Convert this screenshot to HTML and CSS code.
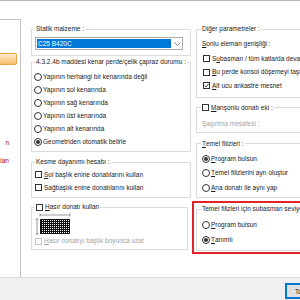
FILE: index.html
```html
<!DOCTYPE html>
<html lang="tr">
<head>
    <meta charset="UTF-8">
    <title>Perde Ayarları</title>
    <link rel="stylesheet" href="styles.css">
</head>
<body>

<div class="window">
    <div class="main">
        <div class="sidebar">
            <div class="tree-item selected"></div>
            <div class="tree-item flagged first">n</div>
            <div class="tree-item flagged">lan</div>
        </div>

        <div class="col col-left">
            <fieldset class="group g-malzeme">
                <legend>Statik malzeme :</legend>
                <div class="combo">
                    <span class="combo-value">C25 B420C</span>
                    <svg class="combo-arrow" width="7" height="4" viewBox="0 0 7 4"><polyline points="0.5,0.5 3.5,3.5 6.5,0.5" fill="none" stroke="#606060" stroke-width="0.8"/></svg>
                </div>
            </fieldset>

            <fieldset class="group g-kenar">
                <legend>4.3.2.4b maddesi kenar perde/çelik çapraz durumu :</legend>
                <div class="row"><span class="radio"></span>Yapının herhangi bir kenarında değil</div>
                <div class="row"><span class="radio"></span>Yapının sol kenarında</div>
                <div class="row"><span class="radio"></span>Yapının sağ kenarında</div>
                <div class="row"><span class="radio"></span>Yapının üst kenarında</div>
                <div class="row"><span class="radio"></span>Yapının alt kenarında</div>
                <div class="row"><span class="radio on"></span>Geometriden otomatik belirle</div>
            </fieldset>

            <fieldset class="group g-kesme">
                <legend>Kesme dayanımı hesabı :</legend>
                <div class="row"><span class="check"></span><u>S</u>ol başlık enine donatılarını kullan</div>
                <div class="row"><span class="check"></span>Sa<u>ğ</u> başlık enine donatılarını kullan</div>
            </fieldset>

            <fieldset class="group g-hasir">
                <legend><span class="check"></span><u>H</u>asır donatı kullan</legend>
                <svg class="mesh" width="37" height="22" viewBox="0 0 37 22">
                    <defs>
                        <pattern id="net" width="2" height="2" patternUnits="userSpaceOnUse">
                            <path d="M0.5 0V2M0 0.5H2" stroke="#111" stroke-width="1"/>
                        </pattern>
                    </defs>
                    <g stroke="#555" stroke-width="0.6" fill="none">
                        <path d="M5 2H35M5 0.5V3.5M35 0.5V3.5"/>
                        <path d="M2 6V21M0.5 6H3.5M0.5 21H3.5"/>
                    </g>
                    <rect x="5" y="6" width="30" height="15" fill="url(#net)"/>
                    <rect x="5.5" y="6.5" width="29" height="14" fill="none" stroke="#111" stroke-width="1"/>
                </svg>
                <div class="row short disabled"><span class="check"></span><u>H</u>asır donatıyı başlık boyunca uzat</div>
            </fieldset>
        </div>

        <div class="col col-right">
            <fieldset class="group g-diger">
                <legend>Diğer parametreler :</legend>
                <div class="row tall"><u>S</u>onlu eleman genişliği :</div>
                <div class="row mid"><span class="check"></span>S<u>u</u> basman / tüm katlarda devam etsin</div>
                <div class="row mid"><span class="check"></span><u>B</u>u perde konsol döşemeyi taşıyor</div>
                <div class="row mid"><span class="check on"><svg width="5" height="5" viewBox="0 0 5 5"><polyline points="0.4,2.6 1.9,4 4.6,0.8" fill="none" stroke="#222" stroke-width="0.9"/></svg></span><u>A</u>lt ucu ankastre mesnet</div>
            </fieldset>

            <fieldset class="group g-manson">
                <legend><span class="check"></span><u>M</u>anşonlu donatı eki :</legend>
                <div class="row field disabled">Şaşırtma mesafesi :</div>
            </fieldset>

            <fieldset class="group g-filiz">
                <legend><u>T</u>emel filizleri :</legend>
                <div class="row wide"><span class="radio on"></span><u>P</u>rogram bulsun</div>
                <div class="row wide"><span class="radio"></span><u>T</u>emel filizlerini ayrı oluştur</div>
                <div class="row wide"><span class="radio"></span><u>A</u>na donatı ile aynı yap</div>
            </fieldset>

            <div class="highlight">
                <fieldset class="group g-subasman">
                    <legend>Temel filizleri için subasman seviyesi</legend>
                    <div class="row wide"><span class="radio"></span><u>P</u>rogram bulsun</div>
                    <div class="row wide"><span class="radio on"></span><u>T</u>anımlı</div>
                </fieldset>
            </div>
        </div>
    </div>

    <div class="footer">
        <button class="btn default">Tamam</button>
        <button class="btn">İptal</button>
    </div>
</div>

</body>
</html>
```

FILE: styles.css
```css
* {
    box-sizing: border-box;
}
body {
    margin: 0;
    font-family: "Liberation Sans", Arial, sans-serif;
    font-size: 6.5px;
    color: #1a1a1a;
    background-color: #fff;
}
.window {
    width: 300px;
    height: 300px;
    overflow: hidden;
    border-top: 1px solid #b9b9b9;
    display: flex;
    flex-direction: column;
}
.main {
    display: flex;
    height: 276px;
    flex: none;
}

/* left tree */
.sidebar {
    width: 21px;
    flex: none;
    margin-top: 18px;
    border-top: 1px solid #c4c4c4;
    border-right: 1px solid #c4c4c4;
}
.tree-item.selected {
    margin-top: 33px;
    width: 17px;
    height: 12px;
    border: 1px solid #e9a445;
    border-left: none;
    border-radius: 0 2px 2px 0;
    background: linear-gradient(#fdeccd, #fbd89e 50%, #f6bc68);
}
.tree-item.flagged {
    width: 9px;
    line-height: 8px;
    text-align: right;
    color: #b50000;
    margin-top: 10px;
}
.tree-item.flagged.first {
    margin-top: 74px;
}

/* columns */
.col {
    flex: none;
    display: flex;
    flex-direction: column;
}
.col-left {
    width: 160px;
    margin-left: 10px;
}
.col-right {
    width: 140px;
    margin-left: 5px;
}

/* group boxes */
.group {
    margin: 0;
    min-width: 0;
    border: 1px solid #dcdcdc;
    padding: 0 0 0 2px;
}
.group legend {
    padding: 0 1px;
    margin-left: 1px;
    height: 8px;
    line-height: 8px;
    white-space: nowrap;
    display: flex;
    align-items: center;
}
.col-right .group {
    padding-left: 5px;
}
.col-right .group legend {
    margin-left: -1px;
}
.group legend .check {
    margin-left: 0;
}
.g-malzeme {
    margin-top: 24px;
    padding-top: 4px;
    padding-bottom: 5px;
}
.g-kenar {
    margin-top: 2px;
    padding-top: 4px;
    padding-bottom: 3px;
}
.g-kesme {
    margin-top: 6px;
    padding-top: 2px;
    padding-bottom: 3px;
}
.g-hasir {
    margin-top: 5px;
    padding-top: 2px;
    padding-bottom: 2px;
    width: 157px;
}
.g-diger {
    margin-top: 24px;
    padding-top: 3px;
    padding-bottom: 4px;
}
.g-manson {
    margin-top: 6px;
    padding-top: 5px;
    padding-bottom: 1px;
}
.g-filiz {
    margin-top: 7px;
    padding-top: 4px;
    padding-bottom: 2px;
}
.g-subasman {
    padding-top: 4px;
    padding-bottom: 3px;
}
.highlight {
    margin-top: 3px;
    margin-left: -4px;
    padding: 2px 0 1px 2px;
    border: 2px solid #e3232c;
    border-right: none;
}

/* rows and controls */
.row {
    display: flex;
    align-items: center;
    height: 13px;
    line-height: 8px;
    white-space: nowrap;
}
.row.short {
    height: 12px;
}
.row.tall {
    height: 16px;
}
.row.mid {
    height: 13.5px;
}
.row.wide {
    height: 14.5px;
}
.g-subasman .row.wide {
    height: 15px;
}
.row.field {
    height: 14px;
}
.disabled {
    color: #a3a3a3;
}
.radio {
    width: 8px;
    height: 8px;
    flex: none;
    border: 1px solid #333;
    border-radius: 50%;
    margin-right: 1px;
    background-color: #fff;
    display: flex;
    align-items: center;
    justify-content: center;
}
.radio.on::after {
    content: "";
    width: 4px;
    height: 4px;
    border-radius: 50%;
    background-color: #333;
}
.check {
    width: 7px;
    height: 7px;
    flex: none;
    border: 1px solid #333;
    margin: 0 2px 0 1px;
    background-color: #fff;
    display: flex;
    align-items: center;
    justify-content: center;
}
.disabled .check {
    border-color: #c4c4c4;
}
.check svg {
    display: block;
}

/* combo */
.combo {
    width: 148px;
    height: 13px;
    margin-left: 1px;
    border: 1px solid #acacac;
    padding: 1px;
    display: flex;
    align-items: center;
}
.combo-value {
    width: 136px;
    height: 100%;
    background-color: #0078d7;
    color: #fff;
    line-height: 9px;
    padding-left: 1px;
}
.combo-arrow {
    margin-left: 3px;
}
.mesh {
    display: block;
    margin-left: 1px;
}

/* footer */
.footer {
    flex: 1;
    background-color: #f0f0f0;
    border-top: 1px solid #dadada;
    padding: 5px 0 0 285px;
    display: flex;
    gap: 6px;
}
.btn {
    flex: none;
    width: 52px;
    height: 16px;
    padding: 0 0 0 9px;
    font-family: inherit;
    font-size: 6.5px;
    text-align: left;
    color: #1a1a1a;
    background-color: #e1e1e1;
    border: 1px solid #adadad;
}
.btn.default {
    border-color: #0078d7;
    box-shadow: inset 0 0 0 1px #0078d7;
}
```
